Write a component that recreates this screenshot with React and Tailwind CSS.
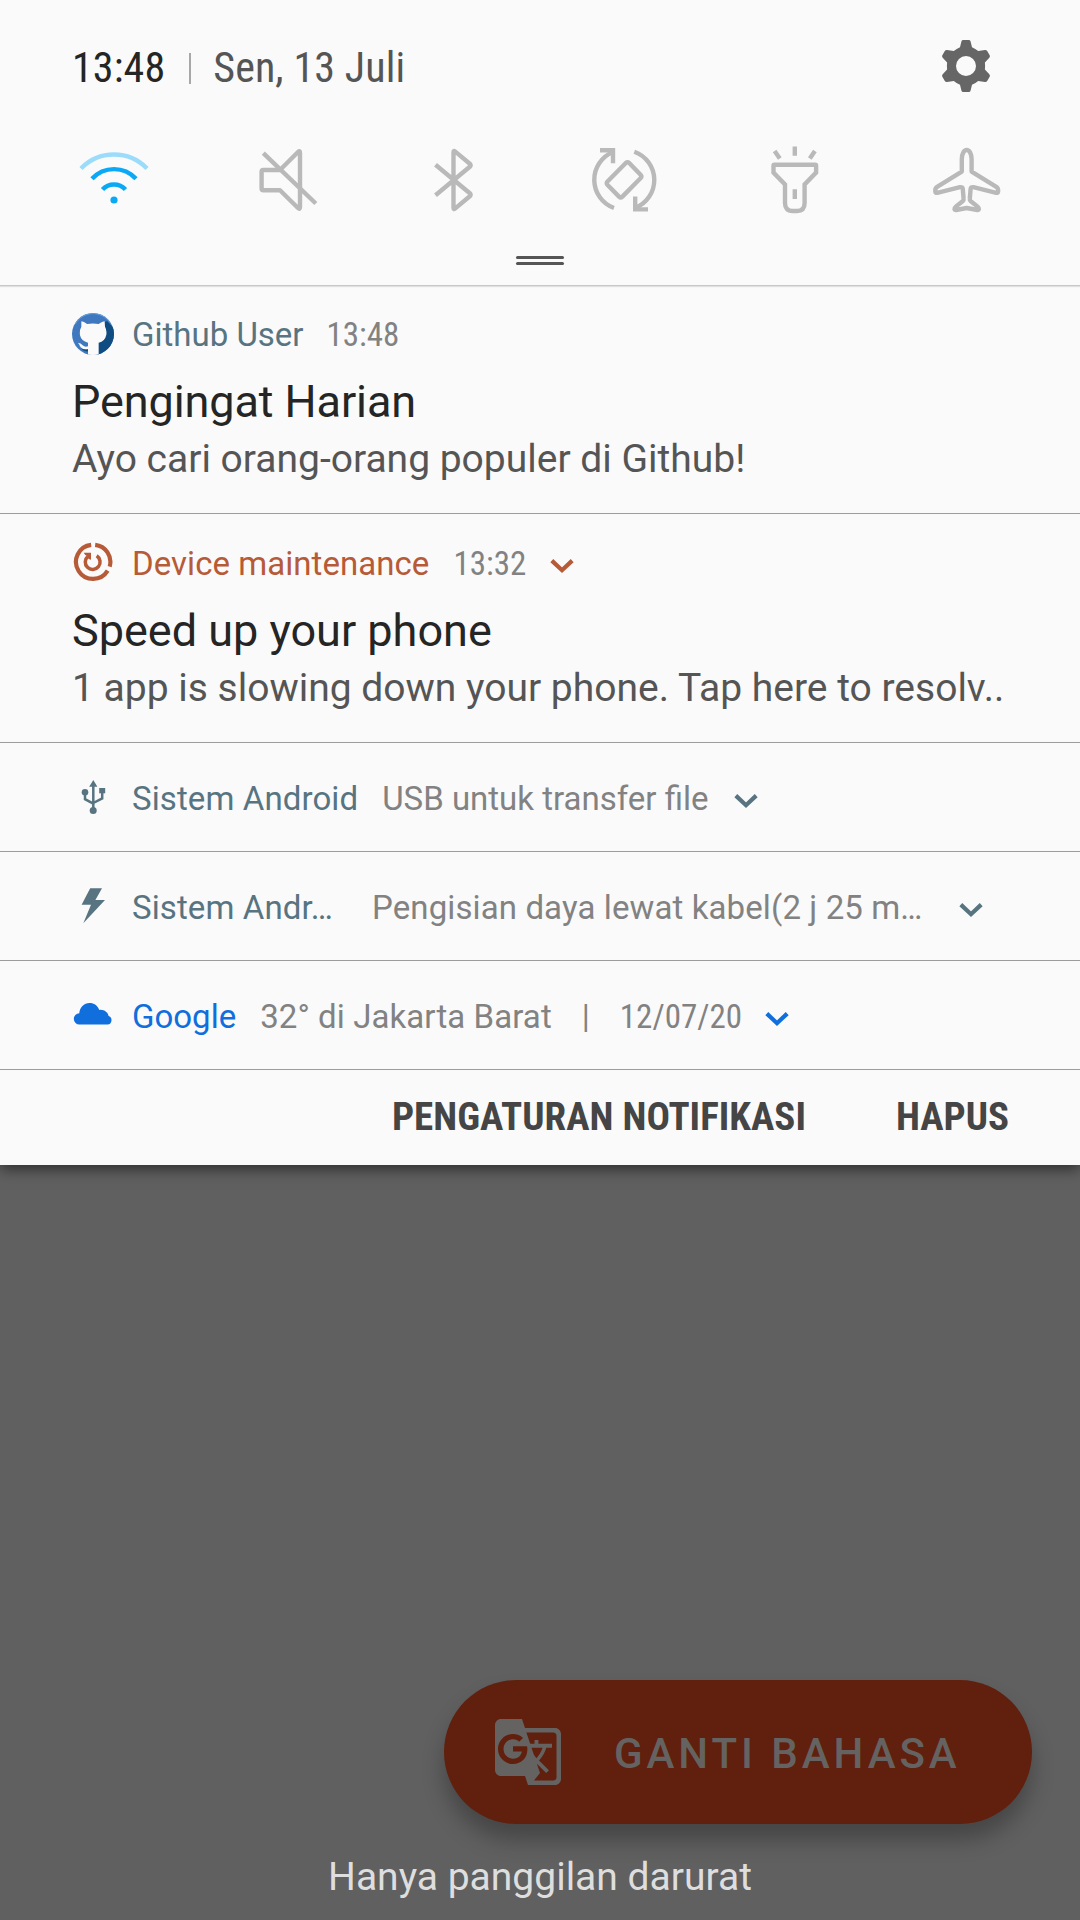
import { MdGTranslate } from 'react-icons/md';

function Tile({ children, color = '#b9b9b9' }) {
  return (
    <svg className="size-[72px]" viewBox="-36 -36 72 72" fill="none" stroke={color} strokeWidth="4.4">
      {children}
    </svg>
  );
}

function Gear() {
  return (
    <svg className="h-[52px] w-[52px]" viewBox="-26 -26 52 52" fill="#666">
      <path
        fillRule="evenodd"
        d="M-3.2 -26H3.2Q4.3 -25.6 4.6 -24.4L6 -18.8Q9.4 -17.2 12.2 -14.9L19 -16.1Q20.6 -16.2 21.2 -15L23.8 -10.5Q24.2 -9.3 23.3 -8.2L18.9 -3.4Q19.3 0 18.9 3.4L23.3 8.2Q24.2 9.3 23.8 10.5L21.2 15Q20.6 16.2 19 16.1L12.2 14.9Q9.4 17.2 6 18.8L4.6 24.4Q4.3 25.6 3.2 26H-3.2Q-4.3 25.6 -4.6 24.4L-6 18.8Q-9.4 17.2 -12.2 14.9L-19 16.1Q-20.6 16.2 -21.2 15L-23.8 10.5Q-24.2 9.3 -23.3 8.2L-18.9 3.4Q-19.3 0 -18.9 -3.4L-23.3 -8.2Q-24.2 -9.3 -23.8 -10.5L-21.2 -15Q-20.6 -16.2 -19 -16.1L-12.2 -14.9Q-9.4 -17.2 -6 -18.8L-4.6 -24.4Q-4.3 -25.6 -3.2 -26ZM0 -10A10 10 0 1 0 0 10A10 10 0 1 0 0 -10Z"
      />
    </svg>
  );
}

function QuickSettings() {
  return (
    <div className="mt-[51px] flex justify-between pr-[77px] pl-[78px]">
      <Tile color="#0ba9f5">
        <circle cx="0" cy="20" r="3.6" fill="#0ba9f5" stroke="none" />
        <path d="M-11.5 9.5A15.7 15.7 0 0 1 11.5 9.5" />
        <path d="M-22 -1.2A29.8 29.8 0 0 1 22 -1.2" />
        <path d="M-33 -11.5A46 46 0 0 1 33 -11.5" stroke="#9bdcfb" />
      </Tile>
      <Tile>
        <path strokeLinejoin="round" d="M-21.6 -10H-5L13 -28Q15 -30 15 -27V27Q15 30 13 28L-5 10.3H-21.6Q-23.4 10.3 -23.4 8.5V-8.2Q-23.4 -10 -21.6 -10Z" />
        <path d="M-21.7 -26.9L30.8 23.5" />
      </Tile>
      <Tile>
        <path strokeLinejoin="round" d="M-19.5 -15.3L14.8 13.2Q16.5 14.8 14.8 16.3L0 28.6Q-1.5 29.8 -1.5 27.5V-27.5Q-1.5 -29.8 0 -28.6L14.8 -16.3Q16.5 -14.8 14.8 -13.2L-19.5 15.3" />
      </Tile>
      <Tile>
        <path d="M-12 28A30 30 0 0 1 -13 -28" />
        <path d="M-26 -29.7H-13V-16.7" />
        <path d="M8.3 -28.3A30 30 0 0 1 9 28" />
        <path d="M22 29.4H9.2V16.5" />
        <path strokeLinejoin="round" d="M3.2 -17L14.6 -5.2Q16.2 -3.4 14.5 -1.7L-3.6 16.6Q-5.3 18.2 -7 16.6L-18.4 5Q-20.2 3.2 -18.5 1.5L-0.2 -17Q1.5 -18.5 3.2 -17Z" />
      </Tile>
      <Tile>
        <g transform="translate(0.6 0)">
          <path d="M-22.2 -15.3H18.6Q19.5 -15.3 19.5 -14.2V-7.5L8 4.5V23Q8 31 0.5 31H-4.1Q-11.6 31 -11.6 23V4.5L-23.1 -7.5V-14.2Q-23.1 -15.3 -22.2 -15.3Z" />
          <path d="M-1.8 -33.5V-24.3M-1.8 9.2V19M-22 -29L-16.8 -21.6M18.3 -29L13.2 -21.6" />
        </g>
      </Tile>
      <Tile>
        <path strokeLinejoin="round" d="M-0.3 -30C-3 -30 -5.2 -26 -5.2 -21V-8.4L-29.5 6.6Q-31.7 8 -31.7 10V11.5Q-31.7 13.2 -29.8 12.8L-7 7.2Q-4.4 6.8 -4.2 9L-3.4 18.8Q-3.2 20.2 -4.4 21.2L-11.2 26.6Q-12.9 28 -12.6 29.2Q-12.3 30.2 -11 30L-0.3 28L10.4 30Q11.7 30.2 12 29.2Q12.3 28 10.6 26.6L3.8 21.2Q2.6 20.2 2.8 18.8L3.6 9Q3.8 6.8 6.4 7.2L29.2 12.8Q31.1 13.2 31.1 11.5V10Q31.1 8 28.9 6.6L4.6 -8.4V-21C4.6 -26 2.4 -30 -0.3 -30Z" />
      </Tile>
    </div>
  );
}

function GithubIcon() {
  return (
    <svg className="mt-[0.5px] size-[42px]" viewBox="18 17 126 126">
      <defs>
        <clipPath id="disc"><circle cx="81" cy="80" r="63" /></clipPath>
      </defs>
      <g clipPath="url(#disc)">
        <rect x="18" y="17" width="126" height="126" fill="#4078c0" />
        <path d="M112 44L124 42L150 70V150H90V104Z" fill="#0f4c81" />
        <path d="M28 50A61 61 0 0 1 132 46" fill="none" stroke="#6aa3dc" strokeWidth="3" />
        <path d="M46 42L52 43Q58 45 63 50Q81 47 98 50Q104 45 110 43L116 42L117 58Q123 68 121 82Q117 102 98 106V145H66V126Q44 130 40 112L36 106Q44 106 50 114Q56 120 66 117V106Q46 102 42 84Q40 68 46 58Z" fill="#fafafa" />
        <path d="M40 112Q48 130 66 126V132Q48 134 40 112Z" fill="#0f4c81" />
      </g>
    </svg>
  );
}

function MaintenanceIcon() {
  return (
    <svg className="size-[42px]" viewBox="18 15 126 126" fill="none" stroke="#b75a38">
      <path strokeWidth="12.5" d="M75.5 26.6A51.2 51.2 0 1 0 125 104" />
      <path strokeWidth="12.5" d="M87.5 26.6A51.2 51.2 0 0 1 131 92" />
      <path strokeWidth="10.5" d="M66 61A22.2 22.2 0 1 0 92 59.5" />
      <path d="M53 50H75V71L68 69L65 61L58 57Z" fill="#b75a38" stroke="none" />
    </svg>
  );
}

function UsbIcon() {
  return (
    <svg className="size-[42px]" viewBox="0 0 42 42" fill="#587481">
      <path d="M21.3 4L25.4 10.8H17.2Z" />
      <circle cx="21.2" cy="34.6" r="3.5" />
      <circle cx="13" cy="16.3" r="3.3" />
      <rect x="27.2" y="12" width="6" height="5.3" />
      <path d="M21.3 10V33M13 16V23.2L21.3 27.6M30.2 16V22.4L21.3 27" fill="none" stroke="#587481" strokeWidth="2.5" />
    </svg>
  );
}

function BoltIcon() {
  return (
    <svg className="size-[42px]" viewBox="0 0 42 42" fill="#587481">
      <path d="M18.2 3.3H30L23.4 15H33L11.3 38.3L19 19.7H9.6Z" />
    </svg>
  );
}

function CloudIcon() {
  return (
    <svg className="size-[42px]" viewBox="0 0 42 42" fill="#106edd">
      <path d="M7.5 30.5A5.6 5.6 0 0 1 7.3 19.3C7.6 13.4 12 9 17.6 9C22 9 25.6 11.6 27.2 15.9C32 15.2 36 18.4 36.6 22A4.4 4.4 0 0 1 35.6 30.5Z" />
    </svg>
  );
}

function Chevron({ color }) {
  return (
    <svg className="mt-[16.5px] h-[16px] w-[26px]" viewBox="0 0 26 16" fill="none" stroke={color} strokeWidth="4.2">
      <path d="M2.8 2.6L13 12.2L23.2 2.6" />
    </svg>
  );
}

const slate = '#587481';

function Notification({ icon, name, nameClass, time, timeClass, chevron, title, titleClass, body, className }) {
  return (
    <section className={`border-b border-[#9c9c9c] pl-[72px] ${className}`}>
      <div className="flex items-start text-[33px] leading-[40px]">
        {icon}
        <span className={`mt-[3px] ml-[18px] ${nameClass}`}>{name}</span>
        <span className={`mt-[3px] text-[#828282] [font-stretch:75%] ${timeClass}`}>{time}</span>
        {chevron && <div className="ml-[23px]"><Chevron color={chevron} /></div>}
      </div>
      <h2 className={`mt-[21px] text-[45px] leading-[52px] text-[#252525] ${titleClass}`}>{title}</h2>
      <p className="mt-[8px] text-[39px] leading-[46px] whitespace-nowrap text-[#555]">{body}</p>
    </section>
  );
}

function CompactRow({ icon, name, nameClass, children, chevron, chevronClass }) {
  return (
    <section className="flex h-[109px] items-start border-b border-[#9c9c9c] pt-[33px] pl-[72px] text-[33px] leading-[40px] whitespace-nowrap text-[#828282]">
      {icon}
      <span className={`mt-[3px] ml-[18px] ${nameClass}`}>{name}</span>
      {children}
      <div className={chevronClass}><Chevron color={chevron} /></div>
    </section>
  );
}

export default function App() {
  return (
    <div className="flex h-[1920px] w-[1080px] flex-col overflow-hidden bg-[#606060] font-['Roboto',sans-serif]">
      <main className="h-[1165px] shrink-0 bg-[#fafafa] shadow-[0_4px_14px_rgba(0,0,0,0.55)]">
        <header className="h-[286px] border-b border-[#c8c8c8] pt-[43px] shadow-[0_1px_1px_rgba(0,0,0,0.1)]">
          <div className="flex h-[50px] items-center pr-[88px] pl-[72px] text-[42px] leading-[50px] [font-stretch:75%]">
            <span className="tracking-[0.1px] text-[#252525]">13:48</span>
            <span className="ml-[24px] h-[31px] w-[2px] bg-[#a8a8a8]" />
            <span className="ml-[22px] tracking-[0.1px] text-[#555]">Sen, 13 Juli</span>
            <div className="-mt-1 ml-auto"><Gear /></div>
          </div>
          <QuickSettings />
          <div className="mx-auto mt-[40px] flex w-[48px] flex-col gap-[3px]">
            <span className="h-[3px] rounded-full bg-[#555]" />
            <span className="h-[3px] rounded-full bg-[#555]" />
          </div>
        </header>

        <Notification
          className="h-[228px] pt-[26px]"
          icon={<GithubIcon />}
          name="Github User"
          nameClass="text-[#587481]"
          time="13:48"
          timeClass="ml-[23px]"
          title="Pengingat Harian"
          titleClass="tracking-[-0.1px]"
          body="Ayo cari orang-orang populer di Github!"
        />
        <Notification
          className="h-[229px] pt-[27px]"
          icon={<MaintenanceIcon />}
          name="Device maintenance"
          nameClass="tracking-[0.05px] text-[#b75a38]"
          time="13:32"
          timeClass="ml-6"
          chevron="#b75a38"
          title="Speed up your phone"
          body="1 app is slowing down your phone. Tap here to resolv.."
        />

        <CompactRow icon={<UsbIcon />} name="Sistem Android" nameClass="tracking-[0.1px] text-[#587481]" chevron={slate} chevronClass="ml-[24px]">
          <span className="mt-[3px] ml-6">USB untuk transfer file</span>
        </CompactRow>
        <CompactRow icon={<BoltIcon />} name="Sistem Andr…" nameClass="w-[240px] tracking-[0.1px] text-[#587481]" chevron={slate} chevronClass="ml-[36px]">
          <span className="mt-[3px] tracking-[0.11px]">Pengisian daya lewat kabel(2 j 25 m…</span>
        </CompactRow>
        <CompactRow icon={<CloudIcon />} name="Google" nameClass="text-[#106edd]" chevron="#106edd" chevronClass="ml-[22px]">
          <span className="mt-[3px] ml-6 tracking-[0.08px]">32° di Jakarta Barat</span>
          <span className="mt-[3px] ml-[30px]">|</span>
          <span className="mt-[3px] ml-[30px] [font-stretch:75%]">12/07/20</span>
        </CompactRow>

        <footer className="flex justify-end gap-[90px] pt-[23px] pr-[71px] text-[39px] leading-[48px] font-bold text-[#454545] [font-stretch:75%]">
          <span className="tracking-[0.04px]">PENGATURAN NOTIFIKASI</span>
          <span>HAPUS</span>
        </footer>
      </main>

      <button className="mt-[515px] mr-[48px] flex h-[144px] w-[588px] shrink-0 items-center self-end rounded-full bg-[#611f0d] pl-[48px] text-[#656361] shadow-[0_16px_22px_rgba(0,0,0,0.28)]">
        <MdGTranslate className="size-[72px]" />
        <span className="mt-[3px] ml-[50px] text-[42px] leading-[50px] font-medium tracking-[3.95px]">GANTI BAHASA</span>
      </button>
      <p className="mt-[29px] text-center text-[39px] leading-[48px] text-[#dedede]">Hanya panggilan darurat</p>
    </div>
  );
}
